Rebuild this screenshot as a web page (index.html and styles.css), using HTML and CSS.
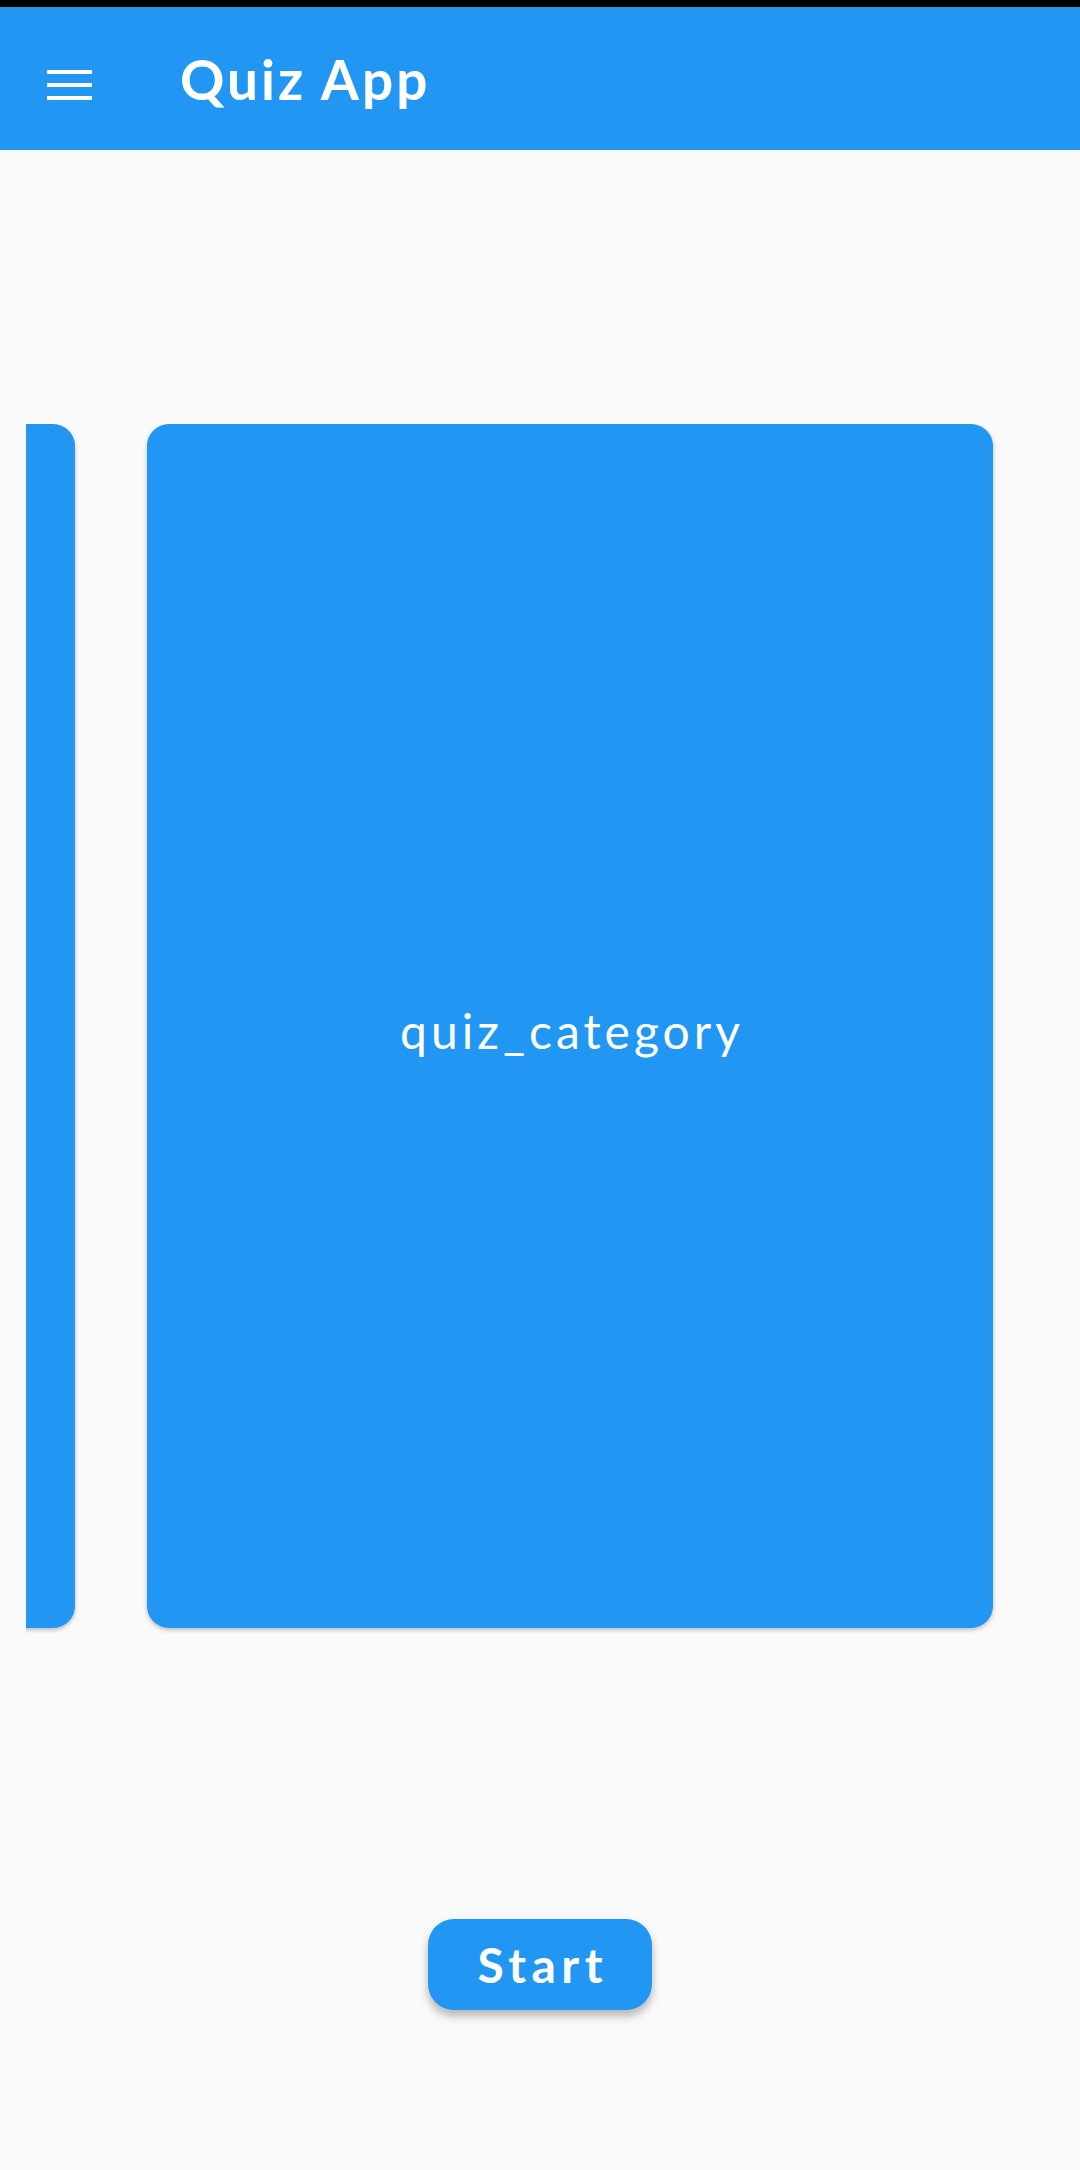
FILE: index.html
```html
<!DOCTYPE html>
<html>
<head>
<meta charset="utf-8">
<link rel="stylesheet" href="styles.css">
</head>
<body>
<div class="status"></div>
<header class="appbar">
  <svg class="menu" width="45" height="30" viewBox="0 0 45 30">
    <rect x="0" y="0" width="45" height="4" fill="#fff"/>
    <rect x="0" y="13" width="45" height="4" fill="#fff"/>
    <rect x="0" y="26" width="45" height="4" fill="#fff"/>
  </svg>
  <h1 class="title">Quiz App</h1>
</header>
<main class="content">
  <div class="carousel">
    <div class="track">
      <div class="card card-prev"></div>
      <div class="card"><span class="card-label">quiz_category</span></div>
      <div class="card"></div>
    </div>
  </div>
  <button class="start">Start</button>
</main>
</body>
</html>
```
FILE: styles.css
```css
html, body {
  margin: 0;
  padding: 0;
}
body {
  width: 1080px;
  height: 2170px;
  background: #fafafa;
  font-family: "Lato", "Open Sans", sans-serif;
  overflow: hidden;
}
.status {
  height: 7px;
  background: #000;
}
.appbar {
  height: 143px;
  background: #2196f3;
  display: flex;
  align-items: center;
  padding-left: 47px;
  box-sizing: border-box;
}
.menu {
  display: block;
  margin-top: 12px;
}
.title {
  margin: 0 0 0 88px;
  color: #fff;
  font-size: 55px;
  font-weight: 700;
  letter-spacing: 3px;
}
.content {
  display: flex;
  flex-direction: column;
  align-items: center;
  padding-top: 274px;
}
.carousel {
  align-self: stretch;
  margin: 0 26px;
  overflow: hidden;
  padding-bottom: 8px;
}
.track {
  display: flex;
  gap: 72px;
  margin-left: -797px;
}
.card {
  flex: 0 0 846px;
  height: 1204px;
  background: #2196f3;
  border-radius: 22px;
  box-shadow: 0 2px 4px rgba(0,0,0,0.25);
  display: flex;
  align-items: center;
  justify-content: center;
}
.card-label {
  color: #fff;
  font-size: 48px;
  font-weight: 400;
  letter-spacing: 4px;
  padding: 8px 0 0 4px;
}
.start {
  margin-top: 283px;
  width: 224px;
  height: 91px;
  border: none;
  border-radius: 26px;
  background: #2196f3;
  color: #fff;
  font-family: "Lato", sans-serif;
  font-size: 48px;
  font-weight: 700;
  letter-spacing: 5.5px;
  box-shadow: 0 6px 10px rgba(0,0,0,0.28);
  padding: 0 0 0 5.5px;
}
```
